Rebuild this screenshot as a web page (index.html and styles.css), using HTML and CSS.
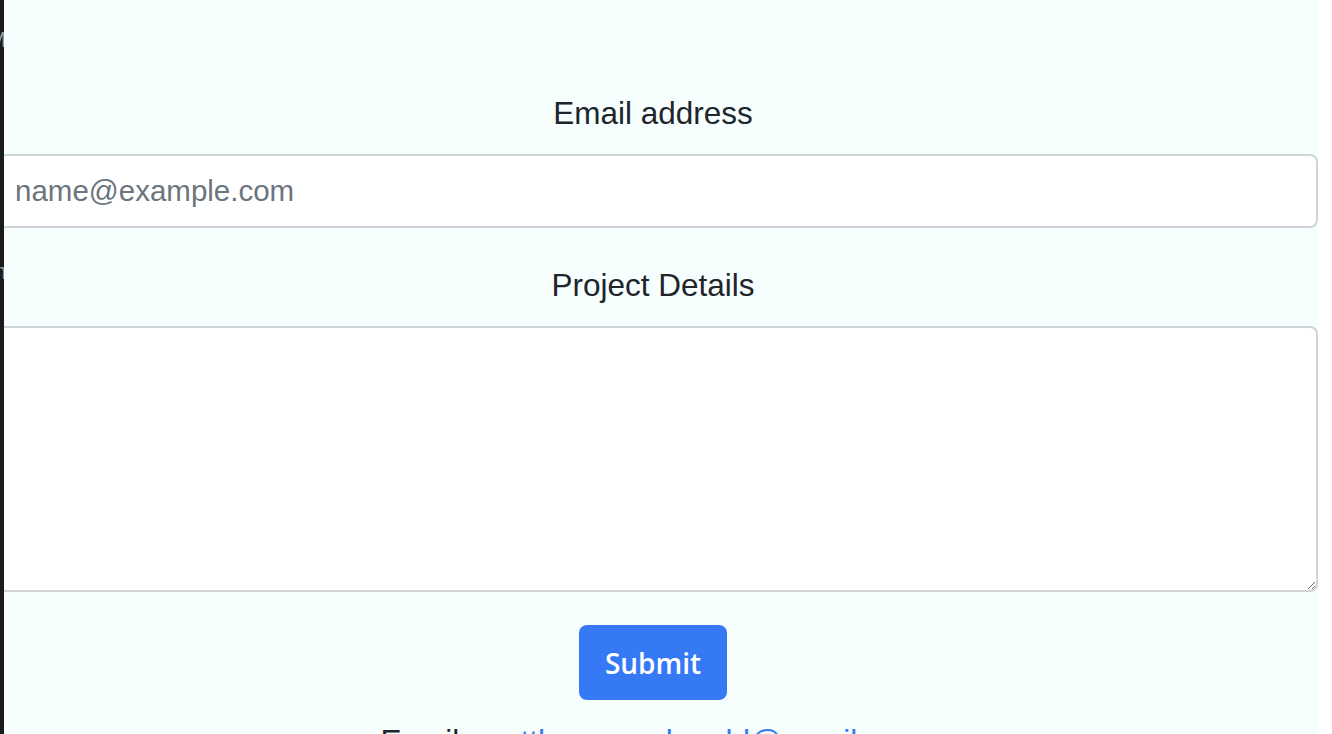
FILE: index.html
```html
<!DOCTYPE html>
<html lang="en">
<head>
<meta charset="utf-8">
<title>Contact</title>
<link rel="stylesheet" href="styles.css">
</head>
<body>
<div class="edge" aria-hidden="true">
  <span>M</span><span>c</span><span>o</span><span>c</span><span>m</span><span>r</span><span>o</span><span>e</span><span>r</span><span>t</span><span>e</span><span>r</span>
</div>
<main class="page">
  <form class="form">
    <div class="group first">
      <label class="label" for="email">Email address</label>
      <input class="control" id="email" type="email" placeholder="name@example.com">
    </div>
    <div class="group second">
      <label class="label" for="details">Project Details</label>
      <textarea class="control area" id="details"></textarea>
    </div>
    <div class="actions">
      <button class="btn" type="button">Submit</button>
    </div>
    <p class="contact">Email: <a href="#" class="link">matthewmacdonald@gmail.com</a></p>
  </form>
</main>
</body>
</html>
```
FILE: styles.css
```css
html, body {
  margin: 0;
  padding: 0;
  height: 100%;
  overflow: hidden;
  background: #ffffff;
}
body {
  font-family: "Liberation Sans", Arial, sans-serif;
  color: #212529;
}
.edge {
  position: absolute;
  left: 0;
  top: 0;
  width: 4px;
  height: 100%;
  background: #1b1b1b;
  overflow: hidden;
  z-index: 2;
  display: flex;
  flex-direction: column;
  gap: 38px;
  padding-top: 30px;
  box-sizing: border-box;
}
.edge span {
  display: block;
  color: #9a9a9a;
  font-size: 22px;
  line-height: 20px;
  margin-left: -12px;
}
.page {
  width: 1318px;
  height: 100%;
  background: #f7fefe;
  padding-top: 90px;
  box-sizing: border-box;
}
.form {
  margin: 0 0 0 -12px;
  display: flex;
  flex-direction: column;
}
.group {
  display: flex;
  flex-direction: column;
}
.first {
  margin-bottom: 34px;
}
.second {
  margin-bottom: 33px;
}
.label {
  display: block;
  text-align: center;
  font-size: 31.5px;
  line-height: 46px;
  margin-bottom: 18px;
}
.control {
  display: block;
  box-sizing: border-box;
  width: 100%;
  height: 74px;
  margin: 0;
  padding: 0 25px;
  font-family: "Liberation Sans", Arial, sans-serif;
  font-size: 29.5px;
  color: #495057;
  background: #ffffff;
  border: 2px solid #cfd4d8;
  border-radius: 8px;
  outline: none;
}
.control::placeholder {
  color: #6c757d;
}
.area {
  height: 266px;
  padding: 12px 25px;
  resize: both;
}
.actions {
  display: flex;
  justify-content: center;
}
.btn {
  width: 148px;
  height: 75px;
  border: none;
  border-radius: 8px;
  background: #3679f5;
  color: #ffffff;
  font-family: "Open Sans", "Noto Sans", sans-serif;
  font-weight: 600;
  font-size: 28px;
  padding: 0;
}
.contact {
  margin: 18px 0 0;
  text-align: center;
  font-size: 31.5px;
  line-height: 46px;
  color: #212529;
}
.link {
  color: #3679f5;
  text-decoration: none;
}
```
